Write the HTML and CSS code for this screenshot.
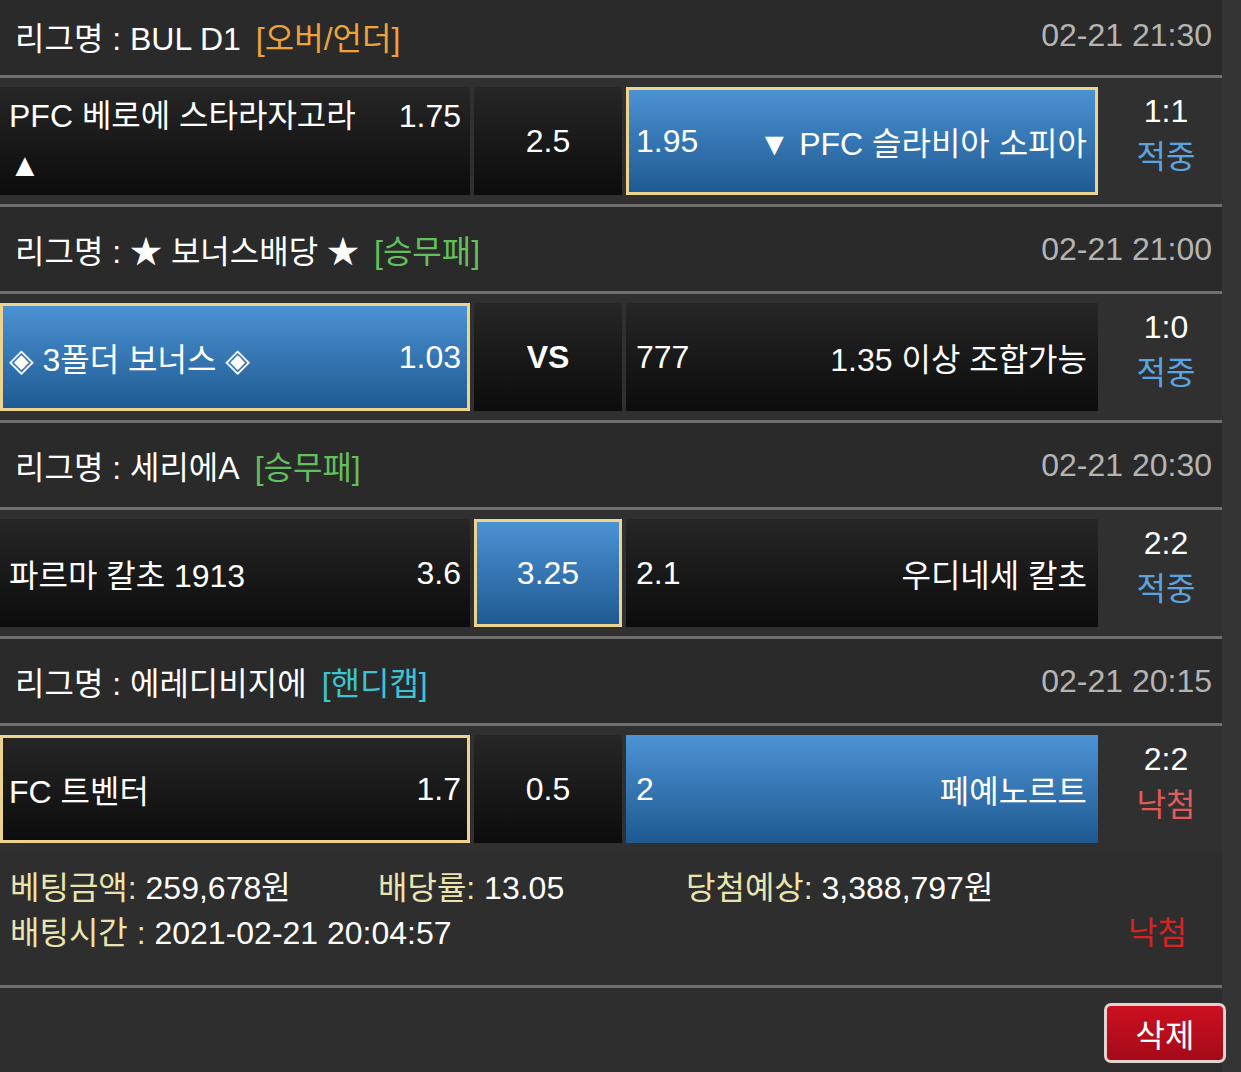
FILE: index.html
```html
<!DOCTYPE html>
<html>
<head>
    <meta charset="utf-8">
    <title>베팅내역</title>
    <link rel="stylesheet" href="styles.css">
</head>
<body>
<div class="wrap">

    <div class="league first">
        <div class="league-head">
            <span class="league-name">리그명 : BUL D1<span class="tag tag-ou">[오버/언더]</span></span>
            <span class="date">02-21 21:30</span>
        </div>
        <div class="match">
            <div class="cell home two-line">
                <div class="line-top"><span>PFC 베로에 스타라자고라</span><span>1.75</span></div>
                <div>▲</div>
            </div>
            <div class="cell mid">2.5</div>
            <div class="cell away sel pick"><span>1.95</span><span>▼ PFC 슬라비아 소피아</span></div>
            <div class="score"><span>1:1</span><span class="hit">적중</span></div>
        </div>
    </div>

    <div class="league">
        <div class="league-head">
            <span class="league-name">리그명 : ★ 보너스배당 ★<span class="tag tag-wdl">[승무패]</span></span>
            <span class="date">02-21 21:00</span>
        </div>
        <div class="match">
            <div class="cell home sel pick"><span>◈ 3폴더 보너스 ◈</span><span>1.03</span></div>
            <div class="cell mid vs">VS</div>
            <div class="cell away"><span>777</span><span>1.35 이상 조합가능</span></div>
            <div class="score"><span>1:0</span><span class="hit">적중</span></div>
        </div>
    </div>

    <div class="league">
        <div class="league-head">
            <span class="league-name">리그명 : 세리에A<span class="tag tag-wdl">[승무패]</span></span>
            <span class="date">02-21 20:30</span>
        </div>
        <div class="match">
            <div class="cell home"><span>파르마 칼초 1913</span><span>3.6</span></div>
            <div class="cell mid sel pick">3.25</div>
            <div class="cell away"><span>2.1</span><span>우디네세 칼초</span></div>
            <div class="score"><span>2:2</span><span class="hit">적중</span></div>
        </div>
    </div>

    <div class="league last">
        <div class="league-head">
            <span class="league-name">리그명 : 에레디비지에<span class="tag tag-hc">[핸디캡]</span></span>
            <span class="date">02-21 20:15</span>
        </div>
        <div class="match">
            <div class="cell home pick"><span>FC 트벤터</span><span>1.7</span></div>
            <div class="cell mid">0.5</div>
            <div class="cell away sel"><span>2</span><span>페예노르트</span></div>
            <div class="score"><span>2:2</span><span class="miss">낙첨</span></div>
        </div>
    </div>

    <div class="summary">
        <div class="sum-row">
            <span><span class="label">베팅금액:</span> 259,678원</span>
            <span><span class="label">배당률:</span> 13.05</span>
            <span><span class="label">당첨예상:</span> 3,388,797원</span>
        </div>
        <div class="sum-row2">
            <span><span class="label">배팅시간 :</span> 2021-02-21 20:04:57</span>
            <span class="result-lose">낙첨</span>
        </div>
    </div>

    <div class="actions">
        <button class="delete-button">삭제</button>
    </div>

</div>
</body>
</html>
```

FILE: styles.css
```css
body{
    margin:0;
    background-color:#343434;
    color:white;
    font-family:"Liberation Sans", "Noto Sans CJK KR", "DejaVu Sans", sans-serif;
    font-size:32px;
}

.wrap{
    width:1222px;
    background-color:#2a2a2a;
}

.league-head{
    height:84px;
    display:flex;
    align-items:center;
    justify-content:space-between;
    padding:0 10px 0 15px;
    border-bottom:3px solid #6f6f6f;
}

.first .league-head{
    height:75px;
    padding-bottom:4px;
    box-sizing:border-box;
    height:78px;
}

.tag{
    margin-left:15px;
}

.tag-ou{
    color:#eda23c;
}

.tag-wdl{
    color:#62bf5c;
}

.tag-hc{
    color:#3ec3d3;
}

.date{
    color:#b4b4b4;
}

.match{
    height:108px;
    padding:9px 0;
    display:grid;
    grid-template-columns:470px 148px 472px 1fr;
    column-gap:4px;
    background-color:#303030;
    border-bottom:3px solid #6f6f6f;
}

.last .match{
    border-bottom:none;
}

.cell{
    display:flex;
    align-items:center;
    justify-content:space-between;
    padding:0 9px;
    background:linear-gradient(#262626, #0c0c0c);
}

.away{
    padding:0 11px 0 10px;
}

.two-line{
    flex-direction:column;
    align-items:stretch;
    justify-content:center;
    line-height:49px;
}

.line-top{
    display:flex;
    justify-content:space-between;
}

.mid{
    justify-content:center;
}

.vs{
    font-weight:bold;
}

.sel{
    background:linear-gradient(#4c93d5, #1e5990);
}

.pick{
    box-shadow:inset 0 0 0 3px #ecd48e;
}

.score{
    display:flex;
    flex-direction:column;
    align-items:center;
    justify-content:center;
    line-height:46px;
    padding:0 0 14px 8px;
}

.hit{
    color:#5aa5e0;
}

.miss{
    color:#e05a5a;
}

.summary{
    padding:14px 35px 29px 10px;
    background-color:#2e2e2e;
    border-bottom:3px solid #6f6f6f;
    line-height:45px;
}

.sum-row{
    display:grid;
    grid-template-columns:368px 308px 1fr;
}

.sum-row2{
    display:flex;
    justify-content:space-between;
}

.label{
    color:#ece4ae;
}

.result-lose{
    color:#d42424;
}

.actions{
    display:flex;
    justify-content:flex-end;
    padding:15px 0 9px;
    background-color:#2e2e2e;
}

.delete-button{
    width:122px;
    height:60px;
    margin-right:-4px;
    background:linear-gradient(#cc1020, #a50a18);
    border:3px solid #e2d2d2;
    border-radius:7px;
    color:white;
    font-family:"Liberation Sans", "Noto Sans CJK KR", sans-serif;
    font-size:32px;
    cursor:pointer;
}
```
